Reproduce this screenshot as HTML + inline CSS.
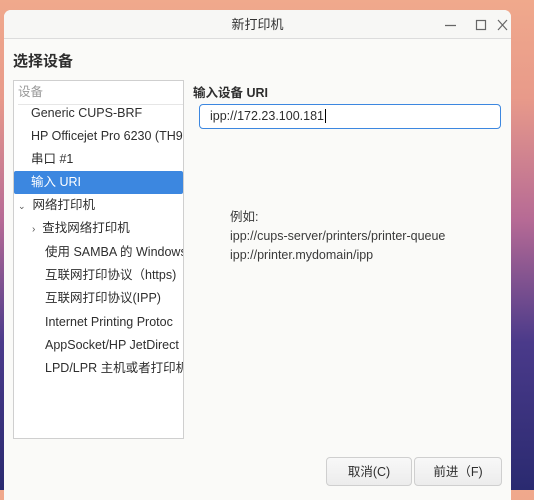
<!DOCTYPE html>
<html><head><meta charset="utf-8"><style>
body{margin:0;width:534px;height:490px;overflow:hidden;position:relative;font-family:"Liberation Sans","Noto Sans CJK SC",sans-serif;
background:linear-gradient(180deg,#f0a98c 0%,#e89a8a 20%,#b66a95 45%,#4a3a8a 70%,#2a2a70 100%);}
.win{position:absolute;left:4px;top:10px;width:507px;height:490px;background:#fafaf8;border-radius:7px 7px 0 0;overflow:hidden}
.tb{height:28px;border-bottom:1px solid #dcdcdc;text-align:center;line-height:29px;font-size:13px;color:#333;background:#f7f7f5}
h1{position:absolute;left:9px;top:40px;margin:0;font-size:15px;font-weight:bold;color:#2e2e2e}
.list{position:absolute;left:9px;top:70px;width:169px;height:357px;border:1px solid #cfcfcf;background:#fff;overflow:hidden}
.row{position:absolute;left:0;height:23px;line-height:23px;font-size:12.5px;color:#2e2e2e;white-space:nowrap}
.sel{background:#3c87e0;color:#fff;width:169px;border-radius:2px}
.lbl{position:absolute;left:189px;top:72px;font-size:12.5px;font-weight:bold;color:#2e2e2e}
.inp{position:absolute;left:195px;top:94px;border:1.5px solid #3c87e0;border-radius:4px;background:#fff;font-size:12.5px;line-height:22px;padding-left:10px;box-sizing:border-box;width:302px;height:25px;color:#2e2e2e}
.ex{position:absolute;left:226px;top:198px;font-size:12.5px;line-height:19px;color:#3a3a3a}
.btn{position:absolute;top:447px;height:29px;border:1px solid #cfcfcf;border-radius:4px;background:linear-gradient(#f8f8f8,#ececec);font-size:12.5px;line-height:29px;text-align:center;color:#2e2e2e;box-sizing:border-box}
</style></head><body>
<div class="win">
<div class="tb">新打印机</div>
<svg style="position:absolute;left:440px;top:8px" width="64" height="14" viewBox="0 0 64 14" fill="none" stroke="#666" stroke-width="1.2">
<path d="M1 7.5H12"/><rect x="32.5" y="2.5" width="9" height="9"/><path d="M54 2L63 12M63 2L54 12"/>
</svg>
<h1>选择设备</h1>
<div class="list">
<div class="row" style="top:0;left:4px;color:#999;border-bottom:1px solid #e6e6e6;width:165px">设备</div>
<div class="row" style="top:21px;left:17px">Generic CUPS-BRF</div>
<div class="row" style="top:44px;left:17px">HP Officejet Pro 6230 (TH9</div>
<div class="row" style="top:67px;left:17px">串口 #1</div>
<div class="row sel" style="top:90px"><span style="padding-left:17px">输入 URI</span></div>
<div class="row" style="top:113px;left:4px"><span style="font-size:9px;color:#555">⌄</span>&nbsp; 网络打印机</div>
<div class="row" style="top:136px;left:18px"><span style="font-size:10px;color:#555">›</span>&nbsp; 查找网络打印机</div>
<div class="row" style="top:160px;left:31px">使用 SAMBA 的 Windows</div>
<div class="row" style="top:183px;left:31px">互联网打印协议（https)</div>
<div class="row" style="top:206px;left:31px">互联网打印协议(IPP)</div>
<div class="row" style="top:230px;left:31px">Internet Printing Protoc</div>
<div class="row" style="top:253px;left:31px">AppSocket/HP JetDirect</div>
<div class="row" style="top:276px;left:31px">LPD/LPR 主机或者打印机</div>
</div>
<div class="lbl">输入设备 URI</div>
<div class="inp">ipp://172.23.100.181<span style="border-left:1px solid #000;margin-left:1px"></span></div>
<div class="ex">例如:<br>ipp://cups-server/printers/printer-queue<br>ipp://printer.mydomain/ipp</div>
<div class="btn" style="left:322px;width:86px">取消(C)</div>
<div class="btn" style="left:410px;width:88px">前进（F)</div>
</div>
</body></html>
